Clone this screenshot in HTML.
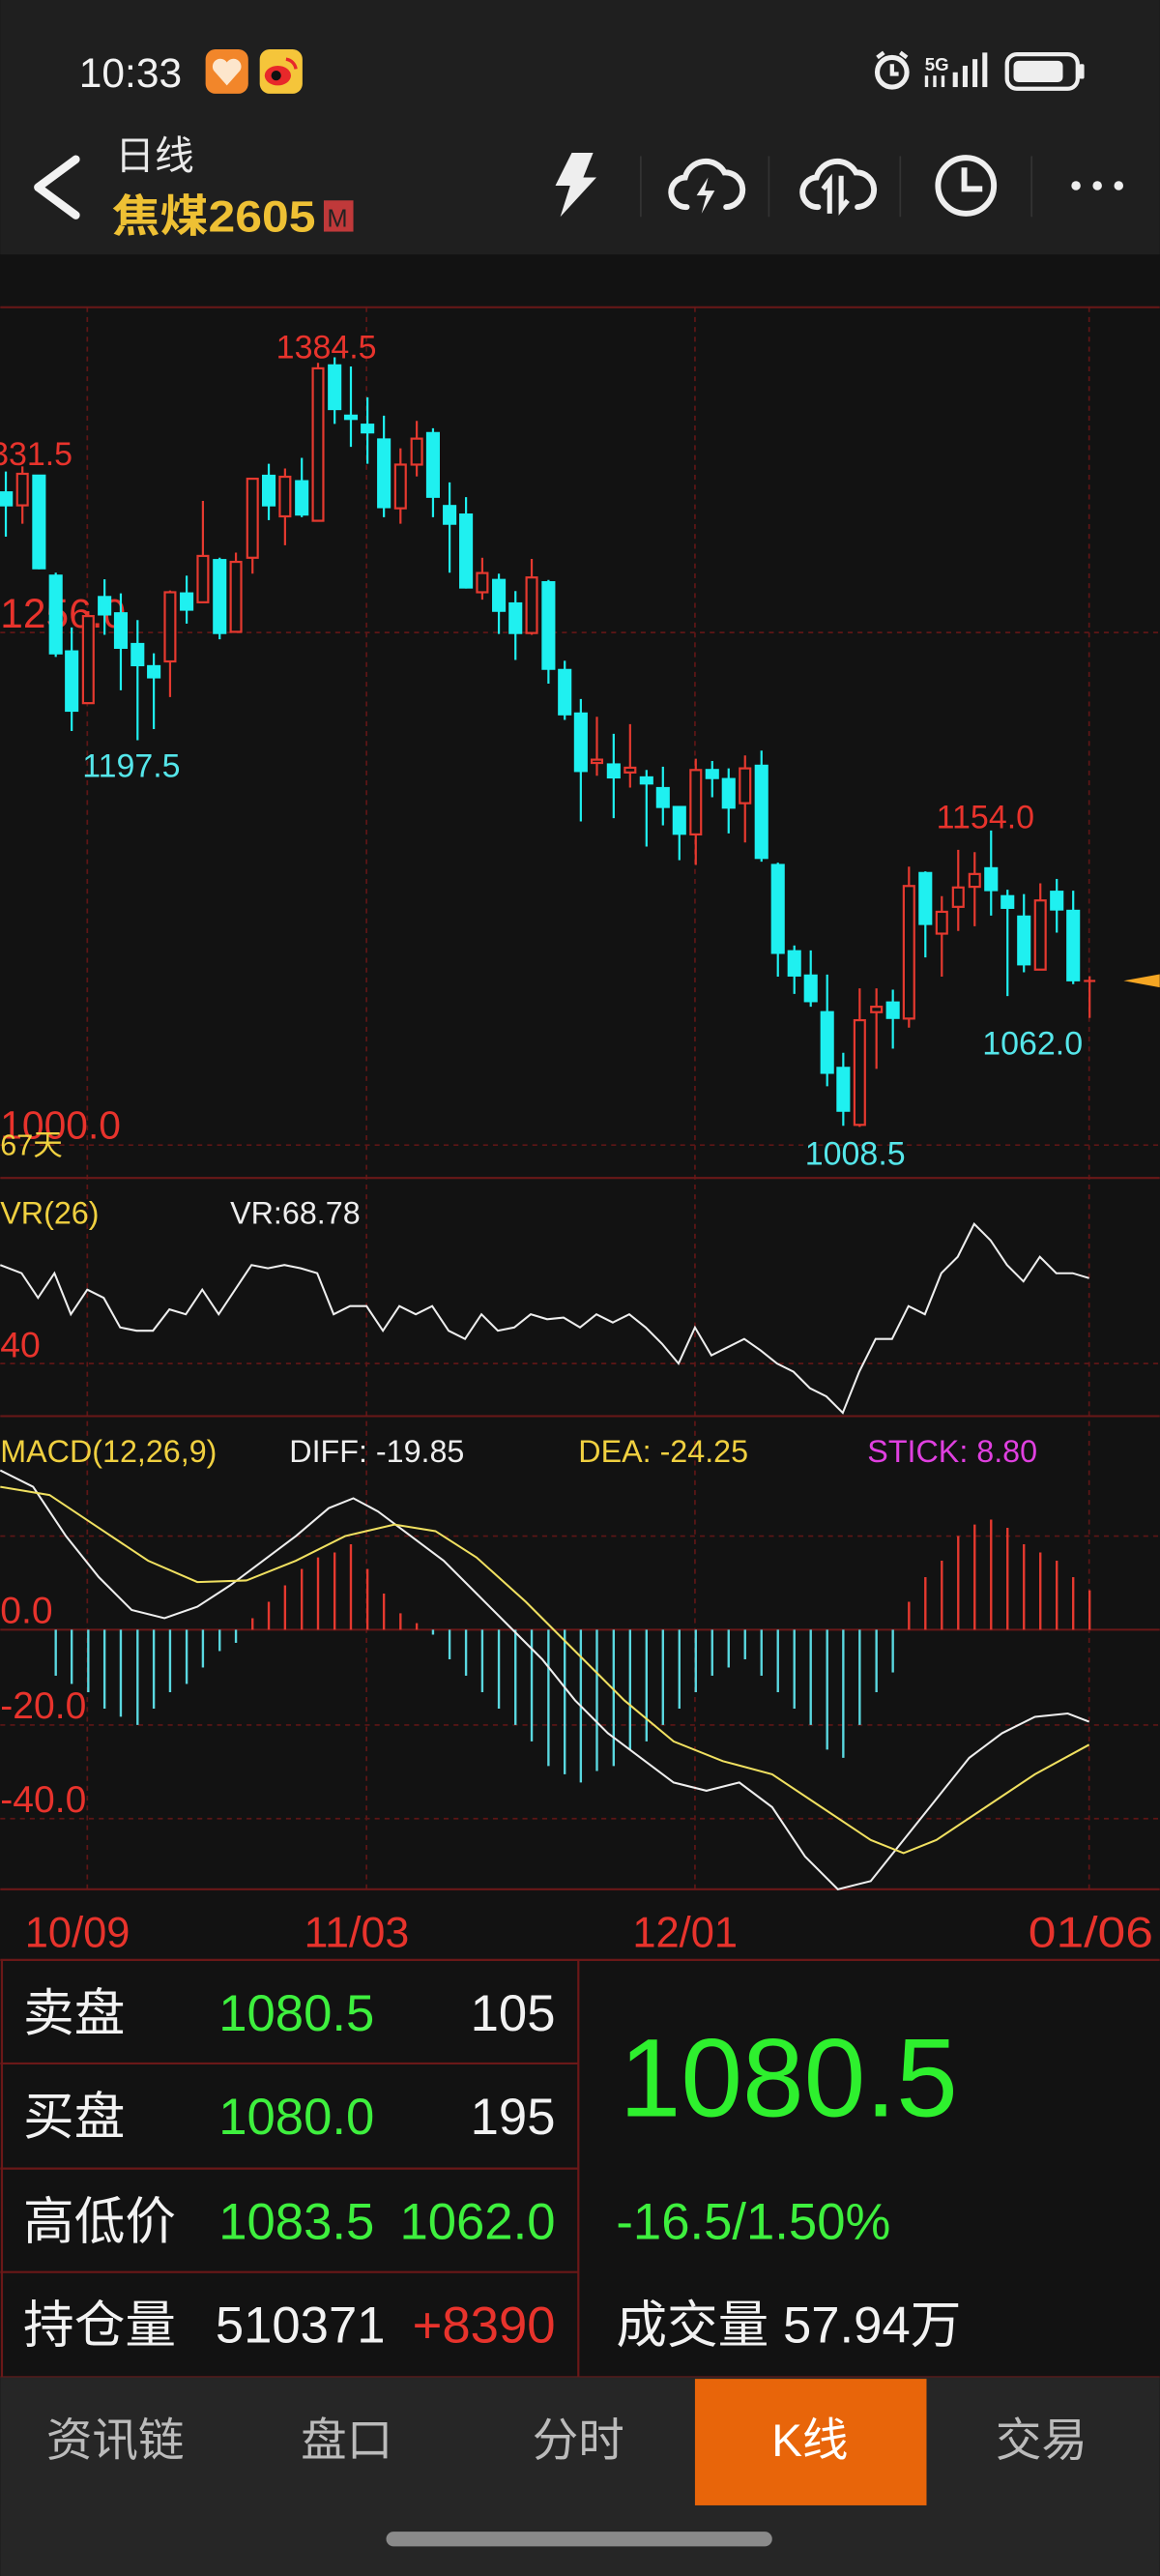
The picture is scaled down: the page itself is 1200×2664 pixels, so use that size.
<!DOCTYPE html>
<html><head><meta charset="utf-8">
<style>
html,body{margin:0;padding:0;background:#121212;}
svg{display:block;}
text{font-family:"Liberation Sans","Noto Sans CJK SC",sans-serif;}
</style></head>
<body>
<svg width="1200" height="2664" viewBox="0 0 706 1568" xmlns="http://www.w3.org/2000/svg">
<rect x="0" y="0" width="706" height="155" fill="#1f1f1f"/>
<rect x="0" y="155" width="706" height="1292" fill="#121212"/>
<text x="48" y="53" font-size="25" fill="#f2f2f2">10:33</text>
<rect x="125" y="30" width="26" height="27" rx="6" fill="#f2862a"/>
<path d="M138 52 L130 43 a4 4 0 0 1 8 -5 a4 4 0 0 1 8 5 Z" fill="#fde6cc"/>
<rect x="158" y="30" width="26" height="27" rx="6" fill="#f5c53a"/>
<ellipse cx="169" cy="46" rx="8" ry="6" fill="#e8282a"/>
<circle cx="168" cy="46" r="3" fill="#111"/>
<path d="M174 36 a7 7 0 0 1 6 6" stroke="#e8282a" stroke-width="2" fill="none"/>
<circle cx="543" cy="44" r="9" stroke="#eee" stroke-width="3" fill="none"/>
<path d="M543 39 V45 H547 M534 35 l4 -3 M552 35 l-4 -3" stroke="#eee" stroke-width="2.5" fill="none"/>
<text x="563" y="43" font-size="11" font-weight="bold" fill="#eee">5G</text>
<g fill="#eee"><rect x="580" y="44" width="3" height="9"/><rect x="586" y="40" width="3" height="13"/><rect x="592" y="36" width="3" height="17"/><rect x="598" y="32" width="3" height="21"/><rect x="563" y="46" width="2" height="7"/><rect x="568" y="46" width="2" height="7"/><rect x="573" y="46" width="2" height="7"/></g>
<rect x="613" y="33" width="43" height="21" rx="6" stroke="#eee" stroke-width="2.5" fill="none"/>
<rect x="617" y="37" width="30" height="13" rx="3" fill="#eee"/>
<rect x="657" y="39" width="3" height="9" rx="1" fill="#eee"/>
<path d="M46 97 L23 114 L46 131" stroke="#f2f2f2" stroke-width="5" fill="none" stroke-linecap="round" stroke-linejoin="round"/>
<text x="70" y="103" font-size="24" fill="#eaeaea">日线</text>
<text x="68" y="141" font-size="27" font-weight="bold" fill="#eec034" textLength="124" lengthAdjust="spacingAndGlyphs">焦煤2605</text>
<rect x="197" y="122" width="18" height="19" fill="#c0393a"/>
<text x="199" y="138" font-size="15" fill="#222">M</text>
<path d="M348 93 L361 93 L355 108 L363 108 L341 132 L347 113 L338 113 Z" fill="#eeeeee"/>
<g stroke="#333" stroke-width="1"><line x1="390" y1="95" x2="390" y2="132"/><line x1="468" y1="95" x2="468" y2="132"/><line x1="548" y1="95" x2="548" y2="132"/><line x1="628" y1="95" x2="628" y2="132"/></g>
<path d="M418 126 a9 9 0 0 1 -1 -18 a13 13 0 0 1 24 -3 a10 10 0 0 1 1 21" stroke="#eee" stroke-width="3.5" fill="none" stroke-linecap="round"/>
<path d="M431 108 L424 119 L430 119 L427 130 L435 116 L429 116 Z" fill="#eee"/>
<path d="M498 126 a9 9 0 0 1 -1 -18 a13 13 0 0 1 24 -3 a10 10 0 0 1 1 21" stroke="#eee" stroke-width="3.5" fill="none" stroke-linecap="round"/>
<path d="M505 130 V110 l-4 5 M512 107 V127 l4 -5" stroke="#eee" stroke-width="3" fill="none"/>
<circle cx="588" cy="113" r="17" stroke="#eee" stroke-width="3.5" fill="none"/>
<path d="M587 102 V115 H598" stroke="#eee" stroke-width="3.5" fill="none"/>
<g fill="#eee"><circle cx="655" cy="113" r="2.8"/><circle cx="668" cy="113" r="2.8"/><circle cx="681" cy="113" r="2.8"/></g>

<g stroke="#5e1616" stroke-width="1" stroke-dasharray="3,3" fill="none">
<line x1="53" y1="187" x2="53" y2="1150"/><line x1="223" y1="187" x2="223" y2="1150"/><line x1="423" y1="187" x2="423" y2="1150"/><line x1="663" y1="187" x2="663" y2="1150"/>
<line x1="0" y1="385" x2="706" y2="385"/><line x1="0" y1="697" x2="706" y2="697"/>
<line x1="0" y1="830" x2="706" y2="830"/>
<line x1="0" y1="935" x2="706" y2="935"/><line x1="0" y1="1050" x2="706" y2="1050"/><line x1="0" y1="1107" x2="706" y2="1107"/>
</g>
<g stroke="#6a1818" stroke-width="1.2">
<line x1="0" y1="187" x2="706" y2="187"/><line x1="0" y1="717" x2="706" y2="717"/><line x1="0" y1="862" x2="706" y2="862"/><line x1="0" y1="992" x2="706" y2="992"/><line x1="0" y1="1150" x2="706" y2="1150"/>
</g>

<text x="168" y="218" font-size="20" fill="#e8332c">1384.5</text>
<text x="-6" y="283" font-size="20" fill="#e8332c">331.5</text>
<text x="0" y="382" font-size="25" fill="#e8332c">1256.0</text>
<text x="50" y="473" font-size="20" fill="#55e6ea">1197.5</text>
<text x="570" y="504" font-size="20" fill="#e8332c">1154.0</text>
<text x="598" y="642" font-size="20" fill="#55e6ea">1062.0</text>
<text x="490" y="709" font-size="20" fill="#55e6ea">1008.5</text>
<text x="0" y="693" font-size="24" fill="#e8332c">1000.0</text>
<text x="0" y="703" font-size="18" fill="#f0d040">67天</text>
<path d="M684 597 L706 593 L706 601 Z" fill="#f5a623"/>

<g stroke="#1ff0f0" stroke-width="1.3" fill="#1ff0f0">
<line x1="3.4" y1="287" x2="3.4" y2="326.7"/><rect x="0" y="299.7" width="7" height="7.9"/>
<line x1="23.6" y1="289.5" x2="23.6" y2="346.5"/><rect x="20.1" y="289.5" width="7" height="56.4"/>
<line x1="33.8" y1="348.6" x2="33.8" y2="399.9"/><rect x="30.3" y="350.4" width="7" height="47.3"/>
<line x1="43.5" y1="381.9" x2="43.5" y2="445"/><rect x="40" y="396.5" width="7" height="36.1"/>
<line x1="63.5" y1="352.6" x2="63.5" y2="386.4"/><rect x="60" y="363.4" width="7" height="10.6"/>
<line x1="73.4" y1="361.2" x2="73.4" y2="420.2"/><rect x="69.9" y="373.3" width="7" height="21"/>
<line x1="83.6" y1="377.4" x2="83.6" y2="450.6"/><rect x="80.1" y="392" width="7" height="12.9"/>
<line x1="93.5" y1="397.7" x2="93.5" y2="443.8"/><rect x="90" y="405.5" width="7" height="6.8"/>
<line x1="113.5" y1="350.4" x2="113.5" y2="379.6"/><rect x="110" y="361.2" width="7" height="9.9"/>
<line x1="133.6" y1="339.5" x2="133.6" y2="389.1"/><rect x="130.1" y="340.9" width="7" height="44.4"/>
<line x1="163.5" y1="282.3" x2="163.5" y2="316.6"/><rect x="160" y="289.6" width="7" height="18"/>
<line x1="183.6" y1="278.7" x2="183.6" y2="314.8"/><rect x="180.1" y="292.9" width="7" height="20.3"/>
<line x1="203.6" y1="217.5" x2="203.6" y2="258"/><rect x="200.1" y="222.4" width="7" height="26.6"/>
<line x1="213.5" y1="223.1" x2="213.5" y2="272"/><rect x="210" y="253" width="7" height="2"/>
<line x1="223.6" y1="241.8" x2="223.6" y2="282.3"/><rect x="220.1" y="258.5" width="7" height="4.7"/>
<line x1="233.6" y1="253" x2="233.6" y2="314.8"/><rect x="230.1" y="267.5" width="7" height="41.2"/>
<line x1="263.5" y1="260.7" x2="263.5" y2="314.8"/><rect x="260" y="263.6" width="7" height="38.8"/>
<line x1="273.6" y1="293.6" x2="273.6" y2="348.6"/><rect x="270.1" y="308" width="7" height="10.8"/>
<line x1="283.6" y1="302.6" x2="283.6" y2="358.2"/><rect x="280.1" y="313.2" width="7" height="44.4"/>
<line x1="303.6" y1="349.2" x2="303.6" y2="385.9"/><rect x="300.1" y="353" width="7" height="18.8"/>
<line x1="313.7" y1="359.8" x2="313.7" y2="401.7"/><rect x="310.2" y="367.3" width="7" height="18"/>
<line x1="333.8" y1="353" x2="333.8" y2="416.1"/><rect x="330.3" y="354.4" width="7" height="52.7"/>
<line x1="343.7" y1="402.2" x2="343.7" y2="438.2"/><rect x="340.2" y="407.8" width="7" height="27"/>
<line x1="353.5" y1="425.5" x2="353.5" y2="500"/><rect x="350" y="434.3" width="7" height="35"/>
<line x1="373.5" y1="446.7" x2="373.5" y2="498"/><rect x="370" y="465.3" width="7" height="7.9"/>
<line x1="393.5" y1="468.7" x2="393.5" y2="515.3"/><rect x="390" y="473.2" width="7" height="3.7"/>
<line x1="403.5" y1="466.7" x2="403.5" y2="502.4"/><rect x="400" y="479.7" width="7" height="11.5"/>
<line x1="413.5" y1="491.2" x2="413.5" y2="523.6"/><rect x="410" y="491.2" width="7" height="16.3"/>
<line x1="433.5" y1="463.2" x2="433.5" y2="485.3"/><rect x="430" y="468.7" width="7" height="4.9"/>
<line x1="443.5" y1="467.7" x2="443.5" y2="507.3"/><rect x="440" y="474.2" width="7" height="17.4"/>
<line x1="463.5" y1="456.9" x2="463.5" y2="524.5"/><rect x="460" y="466.1" width="7" height="56.1"/>
<line x1="473.5" y1="525.1" x2="473.5" y2="594.5"/><rect x="470" y="526.5" width="7" height="53.5"/>
<line x1="483.5" y1="575.5" x2="483.5" y2="605"/><rect x="480" y="579" width="7" height="14.8"/>
<line x1="493.5" y1="578.5" x2="493.5" y2="612.8"/><rect x="490" y="593.8" width="7" height="15.6"/>
<line x1="503.5" y1="593.2" x2="503.5" y2="661.2"/><rect x="500" y="616.1" width="7" height="36.9"/>
<line x1="513.3" y1="640.8" x2="513.3" y2="685.3"/><rect x="509.8" y="650" width="7" height="26.1"/>
<line x1="543.5" y1="602.4" x2="543.5" y2="638.3"/><rect x="540" y="610.2" width="7" height="9.4"/>
<line x1="563.3" y1="530.4" x2="563.3" y2="582.8"/><rect x="559.8" y="531.4" width="7" height="31"/>
<line x1="603.3" y1="505.5" x2="603.3" y2="557.3"/><rect x="599.8" y="528.5" width="7" height="13.3"/>
<line x1="613.3" y1="541.6" x2="613.3" y2="606.3"/><rect x="609.8" y="545.5" width="7" height="7.1"/>
<line x1="623.3" y1="544.2" x2="623.3" y2="591.8"/><rect x="619.8" y="557.9" width="7" height="29.1"/>
<line x1="643.3" y1="535" x2="643.3" y2="567.7"/><rect x="639.8" y="542.8" width="7" height="10.8"/>
<line x1="653.3" y1="542.2" x2="653.3" y2="599"/><rect x="649.8" y="554.4" width="7" height="42.3"/>
</g>
<g stroke="#e5392f" stroke-width="1.3" fill="#121212">
<line x1="13.5" y1="283.9" x2="13.5" y2="318.8"/><rect x="10.3" y="288.4" width="6.4" height="19.2"/>
<line x1="53.6" y1="372" x2="53.6" y2="428"/><rect x="50.4" y="375" width="6.4" height="53"/>
<line x1="103.4" y1="359.4" x2="103.4" y2="424.3"/><rect x="100.2" y="360.5" width="6.4" height="42.1"/>
<line x1="123.4" y1="304.9" x2="123.4" y2="366.6"/><rect x="120.2" y="338.4" width="6.4" height="28.2"/>
<line x1="143.5" y1="336.4" x2="143.5" y2="384.6"/><rect x="140.3" y="342" width="6.4" height="42.6"/>
<line x1="153.6" y1="291.4" x2="153.6" y2="349.2"/><rect x="150.4" y="291.4" width="6.4" height="48.1"/>
<line x1="173.4" y1="285.2" x2="173.4" y2="331.9"/><rect x="170.2" y="290.2" width="6.4" height="24.1"/>
<line x1="193.5" y1="220.9" x2="193.5" y2="317"/><rect x="190.3" y="224.2" width="6.4" height="92.8"/>
<line x1="243.7" y1="272.9" x2="243.7" y2="318.8"/><rect x="240.5" y="282.8" width="6.4" height="26.6"/>
<line x1="253.6" y1="256.2" x2="253.6" y2="290"/><rect x="250.4" y="267" width="6.4" height="15.8"/>
<line x1="293.5" y1="339.5" x2="293.5" y2="365"/><rect x="290.3" y="348.8" width="6.4" height="11.7"/>
<line x1="323.6" y1="340.2" x2="323.6" y2="386.4"/><rect x="320.4" y="351.5" width="6.4" height="33.8"/>
<line x1="363.3" y1="436.3" x2="363.3" y2="472.2"/><rect x="360.1" y="462.4" width="6.4" height="2"/>
<line x1="383.5" y1="440.8" x2="383.5" y2="479.4"/><rect x="380.3" y="467.3" width="6.4" height="2.9"/>
<line x1="423.5" y1="461.8" x2="423.5" y2="526.5"/><rect x="420.3" y="468.7" width="6.4" height="39.2"/>
<line x1="453.5" y1="459.8" x2="453.5" y2="512.8"/><rect x="450.3" y="467.7" width="6.4" height="21.2"/>
<line x1="523.3" y1="601.6" x2="523.3" y2="685.9"/><rect x="520.1" y="621" width="6.4" height="63.7"/>
<line x1="533.5" y1="601.6" x2="533.5" y2="650.6"/><rect x="530.3" y="612.8" width="6.4" height="3.3"/>
<line x1="553.3" y1="527.5" x2="553.3" y2="625.5"/><rect x="550.1" y="539.3" width="6.4" height="80.7"/>
<line x1="573.3" y1="545.5" x2="573.3" y2="594.5"/><rect x="570.1" y="555" width="6.4" height="13.3"/>
<line x1="583.3" y1="517.3" x2="583.3" y2="566.7"/><rect x="580.1" y="540.2" width="6.4" height="11.8"/>
<line x1="593.3" y1="518.7" x2="593.3" y2="563.8"/><rect x="590.1" y="532" width="6.4" height="7.8"/>
<line x1="633.3" y1="537.7" x2="633.3" y2="590.2"/><rect x="630.1" y="548.1" width="6.4" height="42.1"/>
<line x1="663.3" y1="594.2" x2="663.3" y2="619.6"/><line x1="659.8" y1="597.1" x2="666.8" y2="597.1"/>
</g>

<text x="0" y="745" font-size="19" fill="#f0d040">VR(26)</text>
<text x="140" y="745" font-size="19" fill="#eeeeee">VR:68.78</text>
<text x="0" y="826" font-size="22" fill="#e8332c">40</text>
<polyline fill="none" stroke="#eeeeee" stroke-width="1.2" points="0,770 13,775 23,790 33,775 43,800 53,785 63,790 73,808 83,810 93,810 103,797 113,800 123,785 133,800 143,785 153,770 163,772 173,770 183,772 193,775 203,800 213,795 223,795 233,810 243,795 253,800 263,795 273,810 283,815 293,800 303,810 313,808 323,800 333,803 343,802 353,808 363,800 373,805 383,800 393,808 403,818 413,830 423,808 433,825 443,820 453,815 463,822 473,830 483,835 493,845 503,850 513,860 523,835 533,815 543,815 553,795 563,800 573,775 583,765 593,745 603,755 613,770 623,780 633,765 643,775 653,775 663,778"/>

<text x="0" y="890" font-size="19" fill="#f0d040">MACD(12,26,9)</text>
<text x="176" y="890" font-size="19" fill="#eeeeee">DIFF: -19.85</text>
<text x="352" y="890" font-size="19" fill="#f0d040">DEA: -24.25</text>
<text x="528" y="890" font-size="19" fill="#e040e0">STICK: 8.80</text>
<text x="0" y="988" font-size="23" fill="#e8332c">0.0</text>
<text x="0" y="1046" font-size="23" fill="#e8332c">-20.0</text>
<text x="0" y="1103" font-size="23" fill="#e8332c">-40.0</text>
<g stroke="#5ad8e0" stroke-width="1.4">
<line x1="33.8" y1="992" x2="33.8" y2="1020"/><line x1="43.5" y1="992" x2="43.5" y2="1025"/><line x1="53.6" y1="992" x2="53.6" y2="1030"/><line x1="63.5" y1="992" x2="63.5" y2="1040"/><line x1="73.4" y1="992" x2="73.4" y2="1045"/><line x1="83.6" y1="992" x2="83.6" y2="1050"/><line x1="93.5" y1="992" x2="93.5" y2="1040"/><line x1="103.4" y1="992" x2="103.4" y2="1030"/><line x1="113.5" y1="992" x2="113.5" y2="1025"/><line x1="123.4" y1="992" x2="123.4" y2="1015"/><line x1="133.6" y1="992" x2="133.6" y2="1005"/><line x1="143.5" y1="992" x2="143.5" y2="1000"/>
<line x1="263.5" y1="992" x2="263.5" y2="995"/><line x1="273.6" y1="992" x2="273.6" y2="1010"/><line x1="283.6" y1="992" x2="283.6" y2="1020"/><line x1="293.5" y1="992" x2="293.5" y2="1030"/><line x1="303.6" y1="992" x2="303.6" y2="1040"/><line x1="313.7" y1="992" x2="313.7" y2="1050"/><line x1="323.6" y1="992" x2="323.6" y2="1060"/><line x1="333.8" y1="992" x2="333.8" y2="1075"/><line x1="343.7" y1="992" x2="343.7" y2="1080"/><line x1="353.5" y1="992" x2="353.5" y2="1085"/><line x1="363.3" y1="992" x2="363.3" y2="1078"/><line x1="373.5" y1="992" x2="373.5" y2="1075"/><line x1="383.5" y1="992" x2="383.5" y2="1065"/><line x1="393.5" y1="992" x2="393.5" y2="1060"/><line x1="403.5" y1="992" x2="403.5" y2="1050"/><line x1="413.5" y1="992" x2="413.5" y2="1040"/><line x1="423.5" y1="992" x2="423.5" y2="1030"/><line x1="433.5" y1="992" x2="433.5" y2="1020"/><line x1="443.5" y1="992" x2="443.5" y2="1015"/><line x1="453.5" y1="992" x2="453.5" y2="1010"/><line x1="463.5" y1="992" x2="463.5" y2="1020"/><line x1="473.5" y1="992" x2="473.5" y2="1030"/><line x1="483.5" y1="992" x2="483.5" y2="1040"/><line x1="493.5" y1="992" x2="493.5" y2="1050"/><line x1="503.5" y1="992" x2="503.5" y2="1065"/><line x1="513.3" y1="992" x2="513.3" y2="1070"/><line x1="523.3" y1="992" x2="523.3" y2="1050"/><line x1="533.5" y1="992" x2="533.5" y2="1030"/><line x1="543.5" y1="992" x2="543.5" y2="1018"/>
</g>
<g stroke="#e5392f" stroke-width="1.4">
<line x1="153.6" y1="992" x2="153.6" y2="985"/><line x1="163.5" y1="992" x2="163.5" y2="975"/><line x1="173.4" y1="992" x2="173.4" y2="965"/><line x1="183.6" y1="992" x2="183.6" y2="955"/><line x1="193.5" y1="992" x2="193.5" y2="948"/><line x1="203.6" y1="992" x2="203.6" y2="945"/><line x1="213.5" y1="992" x2="213.5" y2="940"/><line x1="223.6" y1="992" x2="223.6" y2="955"/><line x1="233.6" y1="992" x2="233.6" y2="970"/><line x1="243.7" y1="992" x2="243.7" y2="982"/><line x1="253.6" y1="992" x2="253.6" y2="988"/>
<line x1="553.3" y1="992" x2="553.3" y2="975"/><line x1="563.3" y1="992" x2="563.3" y2="960"/><line x1="573.3" y1="992" x2="573.3" y2="950"/><line x1="583.3" y1="992" x2="583.3" y2="935"/><line x1="593.3" y1="992" x2="593.3" y2="928"/><line x1="603.3" y1="992" x2="603.3" y2="925"/><line x1="613.3" y1="992" x2="613.3" y2="930"/><line x1="623.3" y1="992" x2="623.3" y2="940"/><line x1="633.3" y1="992" x2="633.3" y2="945"/><line x1="643.3" y1="992" x2="643.3" y2="950"/><line x1="653.3" y1="992" x2="653.3" y2="960"/><line x1="663.3" y1="992" x2="663.3" y2="968"/>
</g>
<polyline fill="none" stroke="#eeeeee" stroke-width="1.2" points="0,895 20,905 40,935 60,960 80,980 100,985 120,978 140,965 160,950 180,935 200,918 215,912 230,920 250,935 270,950 290,970 310,990 330,1010 350,1035 370,1055 390,1070 410,1085 430,1090 450,1085 470,1100 490,1130 510,1150 530,1145 550,1120 570,1095 590,1070 610,1055 630,1045 650,1043 663,1048"/>
<polyline fill="none" stroke="#f0e060" stroke-width="1.2" points="0,905 30,910 60,930 90,950 120,963 150,962 180,950 210,935 240,928 265,932 290,948 320,975 350,1005 380,1035 410,1060 440,1072 470,1080 500,1100 530,1120 550,1128 570,1120 600,1100 630,1080 663,1062"/>

<g font-size="26" fill="#e8332c">
<text x="15" y="1185" textLength="64" lengthAdjust="spacingAndGlyphs">10/09</text><text x="185" y="1185" textLength="64" lengthAdjust="spacingAndGlyphs">11/03</text><text x="385" y="1185" textLength="64" lengthAdjust="spacingAndGlyphs">12/01</text><text x="626" y="1185" textLength="76" lengthAdjust="spacingAndGlyphs">01/06</text>
</g>

<g stroke="#6a1818" stroke-width="1.3" fill="none">
<line x1="0" y1="1193" x2="706" y2="1193"/><line x1="352" y1="1193" x2="352" y2="1447"/>
<line x1="0" y1="1256" x2="352" y2="1256"/><line x1="0" y1="1320" x2="352" y2="1320"/><line x1="0" y1="1383" x2="352" y2="1383"/>
<line x1="1" y1="1193" x2="1" y2="1447"/><line x1="0" y1="1447" x2="706" y2="1447"/>
</g>
<g font-size="31">
<text x="14" y="1236" fill="#f2f2f2">卖盘</text><text x="133" y="1236" fill="#3ef03e">1080.5</text><text x="338" y="1236" fill="#f2f2f2" text-anchor="end">105</text>
<text x="14" y="1299" fill="#f2f2f2">买盘</text><text x="133" y="1299" fill="#3ef03e">1080.0</text><text x="338" y="1299" fill="#f2f2f2" text-anchor="end">195</text>
<text x="14" y="1363" fill="#f2f2f2">高低价</text><text x="133" y="1363" fill="#3ef03e">1083.5</text><text x="338" y="1363" fill="#3ef03e" text-anchor="end">1062.0</text>
<text x="14" y="1426" fill="#f2f2f2">持仓量</text><text x="131" y="1426" fill="#f2f2f2">510371</text><text x="338" y="1426" fill="#e8332c" text-anchor="end">+8390</text>
<text x="375" y="1363" fill="#3ef03e">-16.5/1.50%</text>
<text x="375" y="1426" fill="#f2f2f2">成交量 57.94万</text>
</g>
<text x="377" y="1288" font-size="68" fill="#2ef02e" textLength="206" lengthAdjust="spacingAndGlyphs">1080.5</text>

<rect x="0" y="1447" width="706" height="121" fill="#262626"/>
<rect x="423" y="1448" width="141" height="77" fill="#e8650a"/>
<g font-size="28" fill="#bbbbbb" text-anchor="middle">
<text x="70" y="1495">资讯链</text><text x="211" y="1495">盘口</text><text x="352" y="1495">分时</text><text x="493" y="1495" fill="#ffffff">K线</text><text x="634" y="1495">交易</text>
</g>
<rect x="235" y="1541" width="235" height="9" rx="4.5" fill="#8a8a8a"/>
</svg>
</body></html>
